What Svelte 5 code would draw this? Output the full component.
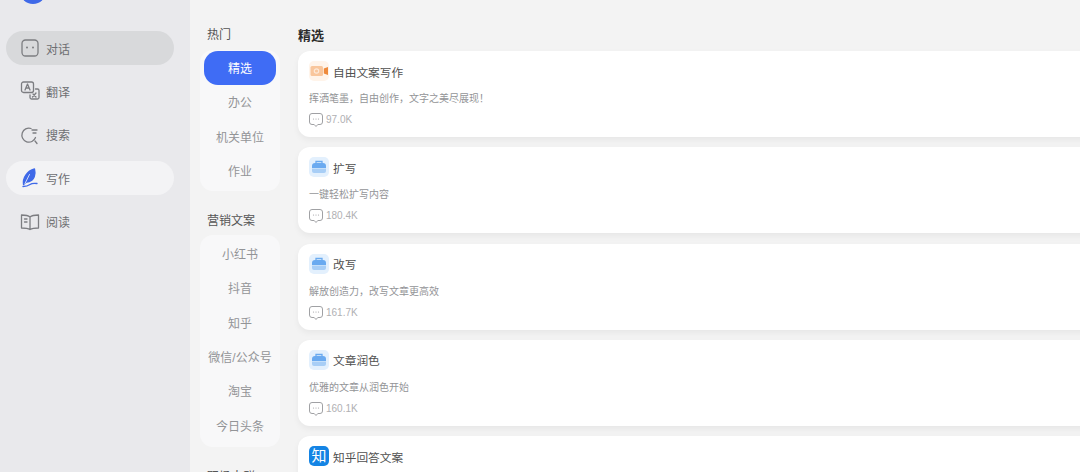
<script>
  const nav = [
    { id: 'chat', label: '对话', cls: 'hover' },
    { id: 'trans', label: '翻译', cls: '' },
    { id: 'search', label: '搜索', cls: '' },
    { id: 'write', label: '写作', cls: 'active' },
    { id: 'read', label: '阅读', cls: '' }
  ];
  const groups = [
    { title: '热门', items: ['精选', '办公', '机关单位', '作业'] },
    { title: '营销文案', items: ['小红书', '抖音', '知乎', '微信/公众号', '淘宝', '今日头条'] },
    { title: '职场人群', items: [] }
  ];
  const cards = [
    { icon: 'video', title: '自由文案写作', desc: '挥洒笔墨\uFF0C自由创作\uFF0C文字之美尽展现\uFF01', n: '97.0K' },
    { icon: 'bag', title: '扩写', desc: '一键轻松扩写内容', n: '180.4K' },
    { icon: 'bag', title: '改写', desc: '解放创造力\uFF0C改写文章更高效', n: '161.7K' },
    { icon: 'bag', title: '文章润色', desc: '优雅的文章从润色开始', n: '160.1K' },
    { icon: 'zhi', title: '知乎回答文案', desc: '', n: '' }
  ];
</script>

<div class="page">
  <aside class="side">
    <div class="logo"></div>
    <nav class="nav">
      {#each nav as n}
        <div class="nav-item {n.cls}">
          <svg class="nav-icon" viewBox="0 0 20 20" width="20" height="20" fill="none" stroke="#7c7d81" stroke-width="1.3" stroke-linecap="round" stroke-linejoin="round">
            {#if n.id === 'chat'}
              <rect x="2" y="2" width="16" height="16" rx="3.5" />
              <circle cx="7" cy="9.500" r="1" fill="#7c7d81" stroke="none" />
              <circle cx="13" cy="9.500" r="1" fill="#7c7d81" stroke="none" />
            {:else if n.id === 'trans'}
              <path d="M3.500 1h8a2 2 0 0 1 2 2v6.500a2 2 0 0 1-2 2h-8a2 2 0 0 1-2-2V3a2 2 0 0 1 2-2z" />
              <path d="M5 9l2.500-6 2.500 6M5.800 7h3.400" />
              <path d="M15.500 8h2a1.500 1.500 0 0 1 1.500 1.500v7a1.500 1.500 0 0 1-1.500 1.500h-6a1.500 1.500 0 0 1-1.500-1.500V14" />
              <path d="M12.500 16l3.500-4M13 13l3 3" />
            {:else if n.id === 'search'}
              <path d="M15.500 12.500a7 7 0 1 1-4.500-9" />
              <path d="M12 5h5M13 8h3M15 16l2 2.500" />
            {:else if n.id === 'write'}
              <path d="M3.500 16.500C2.500 10 7 3 14.500 1c1.500 5.500-.5 11-5 12.500l-3 .5z" fill="#3f69e8" stroke="#3f69e8" />
              <path d="M9.500 6.500L5 15.500" stroke="#dfe5f8" stroke-width=".9" />
              <path d="M3 18.500c3 0 5-.5 7-2s3.500-1.500 7-1" stroke="#3f69e8" />
            {:else}
              <path d="M10 5C8 3.200 5 3 1.500 3v13c3.500 0 6.500.3 8.500 1.500 2-1.200 5-1.500 8.500-1.500V3C15 3 12 3.200 10 5zM10 5v12.500" />
              <path d="M4.500 7h2.500M4.500 10h2.500" />
            {/if}
          </svg>
          <span>{n.label}</span>
        </div>
      {/each}
    </nav>
  </aside>

  <section class="cats">
    {#each groups as g, gi}
      <h3 class="cat-title">{g.title}</h3>
      {#if g.items.length}
        <div class="panel" class:wide={gi > 0}>
          {#each g.items as item, i}
            <div class="cat" class:on={gi === 0 && i === 0}>{item}</div>
          {/each}
        </div>
      {/if}
    {/each}
  </section>

  <main class="main">
    <h2 class="heading">精选</h2>
    <div class="list">
      {#each cards as c}
        <article class="card">
          <div class="card-head">
            {#if c.icon === 'video'}
              <span class="ic ic-video">
                <svg viewBox="0 0 20 20" width="20" height="20">
                  <rect x="1.500" y="5" width="12.500" height="10" rx="1.500" fill="#f9c69c" />
                  <circle cx="7.500" cy="10" r="2.200" fill="none" stroke="#fde9d8" stroke-width="1.200" />
                  <path d="M14.800 7.500l4.200-1.500v8l-4.200-1.500z" fill="#ee8a3c" />
                </svg>
              </span>
            {:else if c.icon === 'bag'}
              <span class="ic ic-bag">
                <svg viewBox="0 0 20 20" width="20" height="20">
                  <path d="M7 6.500V4.500h6v2" fill="none" stroke="#6aaaf0" stroke-width="1.300" />
                  <path d="M3 11V9a3 3 0 0 1 3-3h8a3 3 0 0 1 3 3v2z" fill="#6aaaf0" />
                  <path d="M3 11.500h14V14a2 2 0 0 1-2 2H5a2 2 0 0 1-2-2z" fill="#a8cef6" />
                </svg>
              </span>
            {:else}
              <span class="ic ic-zhi">知</span>
            {/if}
            <span class="card-title">{c.title}</span>
          </div>
          {#if c.desc}
            <p class="desc">{c.desc}</p>
            <div class="stat">
              <svg viewBox="0 0 14 14" width="14" height="14" fill="none" stroke="#a0a1a4" stroke-width="1" stroke-linejoin="round">
                <path d="M3 .5h8A2.500 2.500 0 0 1 13.500 3v6A2.500 2.500 0 0 1 11 11.500H8.800L7 13.500 5.200 11.500H3A2.500 2.500 0 0 1 .5 9V3A2.500 2.500 0 0 1 3 .5z" />
                <circle cx="4.500" cy="6" r=".6" fill="#a0a1a4" stroke="none" />
                <circle cx="7" cy="6" r=".6" fill="#a0a1a4" stroke="none" />
                <circle cx="9.500" cy="6" r=".6" fill="#a0a1a4" stroke="none" />
              </svg>
              <span>{c.n}</span>
            </div>
          {/if}
        </article>
      {/each}
    </div>
  </main>
</div>

<style>
  :global(body) {
    margin: 0;
    background: #f3f3f3;
  }
  .page {
    display: flex;
    width: 1080px;
    height: 472px;
    overflow: hidden;
    background: #f3f3f3;
    font-family: "Liberation Sans", "Noto Sans CJK SC", sans-serif;
  }
  .side {
    flex: 0 0 190px;
    background: #e9e9ec;
    padding: 0 16px 0 6px;
    box-sizing: border-box;
  }
  .logo {
    width: 26px;
    height: 26px;
    margin: -22px 0 0 14px;
    border-radius: 50%;
    background: #3f69e8;
  }
  .nav {
    margin-top: 27px;
    display: flex;
    flex-direction: column;
    gap: 9.400px;
  }
  .nav-item {
    height: 34px;
    border-radius: 17px;
    padding-left: 14px;
    display: flex;
    align-items: center;
    gap: 6px;
    font-size: 12px;
    color: #6e6f72;
  }
  .nav-item.hover {
    background: #d8d9db;
  }
  .nav-item.active {
    background: #f3f3f5;
  }
  .nav-icon {
    flex: none;
  }
  .cats {
    flex: 0 0 108px;
    padding: 0 18px 0 10px;
    box-sizing: border-box;
  }
  .cat-title {
    margin: 0;
    padding-left: 7px;
    font-size: 12px;
    font-weight: 400;
    line-height: 17px;
    color: #555;
  }
  .cat-title:first-child {
    margin-top: 27px;
  }
  .panel {
    margin: 6px 0 22px;
    width: 80px;
    padding: 1px 4px 3px;
    box-sizing: border-box;
    background: #f8f8f9;
    border-radius: 13px;
  }
  .panel.wide {
    margin-top: 5px;
    padding: 2px 4px 4px;
  }
  .cat {
    height: 34.300px;
    line-height: 36px;
    text-align: center;
    font-size: 12px;
    color: #939497;
    white-space: nowrap;
  }
  .cat.on {
    background: #3f6cf5;
    color: #fff;
    border-radius: 14px;
  }
  .main {
    flex: 1;
    min-width: 0;
  }
  .heading {
    margin: 27px 0 0;
    font-size: 13px;
    line-height: 18px;
    font-weight: 700;
    color: #2c2c2c;
  }
  .list {
    margin-top: 6px;
    display: flex;
    flex-direction: column;
    gap: 10.300px;
    width: 800px;
  }
  .card {
    flex: none;
    height: 86px;
    box-sizing: border-box;
    background: #fff;
    border-radius: 12px;
    padding: 10px 0 0 11px;
    box-shadow: 0 3px 6px rgba(0, 0, 0, 0.05);
  }
  .card-head {
    display: flex;
    align-items: center;
    gap: 4px;
    height: 20px;
  }
  .ic {
    flex: none;
    width: 20px;
    height: 20px;
    border-radius: 5px;
    display: block;
  }
  .ic svg {
    display: block;
  }
  .ic-video {
    background: #fff4ea;
  }
  .ic-bag {
    background: #e3f0fd;
  }
  .ic-zhi {
    background: #1484e4;
    color: #fff;
    font-size: 15px;
    line-height: 20px;
    text-align: center;
  }
  .card-title {
    font-size: 11.700px;
    color: #505050;
  }
  .desc {
    margin: 11px 0 0;
    font-size: 10px;
    line-height: 14px;
    color: #939497;
  }
  .stat {
    margin-top: 7px;
    display: flex;
    align-items: center;
    gap: 3px;
    font-size: 10px;
    line-height: 14px;
    color: #b0b0b3;
  }
  .stat svg {
    flex: none;
  }
</style>
